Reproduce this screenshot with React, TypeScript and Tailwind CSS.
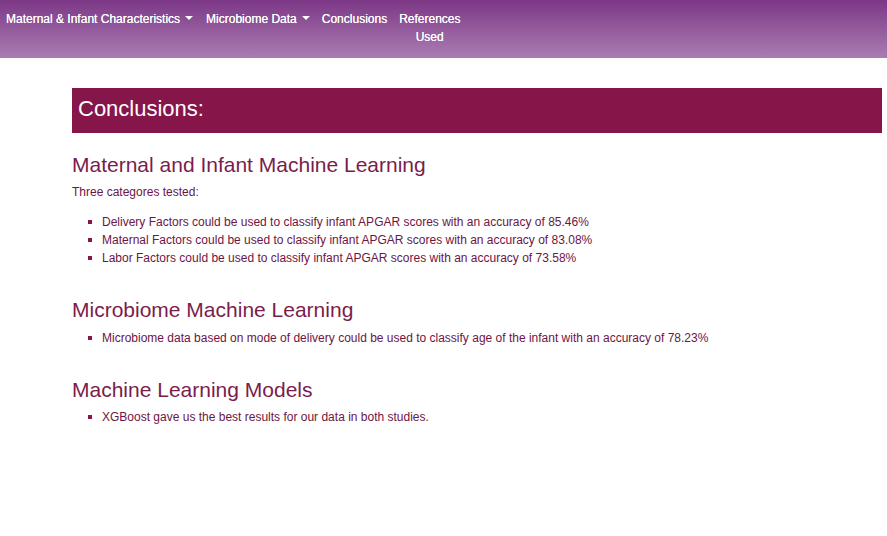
import React from "react";

const Caret = () => (
  <span className="inline-block ml-[5px] align-middle w-0 h-0 border-l-[4px] border-r-[4px] border-t-[4px] border-l-transparent border-r-transparent border-t-white relative top-[-2px]" />
);

const Bullet = ({ children }: { children: React.ReactNode }) => (
  <li className="flex items-center h-[18px]">
    <span className="ml-[16px] mr-[10px] w-[4px] h-[4px] bg-[#861549] shrink-0" />
    <span>{children}</span>
  </li>
);

export default function App() {
  return (
    <div className="min-h-[536px] bg-white" style={{ fontFamily: '"Liberation Sans", Arial, sans-serif' }}>
      <nav className="h-[58px] bg-gradient-to-b from-[#7c3786] to-[#aa7db2] text-white text-[12px] leading-[18px] [text-shadow:0_0_0.4px_#fff]">
        <div className="flex items-start pt-[10px] pl-[6px]">
          <span className="whitespace-nowrap">Maternal &amp; Infant Characteristics<Caret /></span>
          <span className="ml-[13px] whitespace-nowrap">Microbiome Data<Caret /></span>
          <span className="ml-[12px] whitespace-nowrap">Conclusions</span>
          <span className="ml-[12px] w-[61px] text-center">References Used</span>
        </div>
      </nav>
      <main className="pl-[72px] pr-[5px] text-[12px] leading-[18px] text-[#6d1545]">
        <div className="mt-[30px] h-[45px] bg-[#861549] text-white text-[22px] leading-[38px] pl-[6px] pt-[2px]">
          Conclusions:
        </div>
        <h2 className="mt-[20px] text-[21px] leading-[24px] text-[#7a1d4d]">Maternal and Infant Machine Learning</h2>
        <p className="mt-[6px]">Three categores tested:</p>
        <ul className="mt-[12px]">
          <Bullet>Delivery Factors could be used to classify infant APGAR scores with an accuracy of 85.46%</Bullet>
          <Bullet>Maternal Factors could be used to classify infant APGAR scores with an accuracy of 83.08%</Bullet>
          <Bullet>Labor Factors could be used to classify infant APGAR scores with an accuracy of 73.58%</Bullet>
        </ul>
        <h2 className="mt-[31px] text-[21px] leading-[24px] text-[#7a1d4d]">Microbiome Machine Learning</h2>
        <ul className="mt-[7px]">
          <Bullet>Microbiome data based on mode of delivery could be used to classify age of the infant with an accuracy of 78.23%</Bullet>
        </ul>
        <h2 className="mt-[31px] text-[21px] leading-[24px] text-[#7a1d4d]">Machine Learning Models</h2>
        <ul className="mt-[6px]">
          <Bullet>XGBoost gave us the best results for our data in both studies.</Bullet>
        </ul>
      </main>
    </div>
  );
}
